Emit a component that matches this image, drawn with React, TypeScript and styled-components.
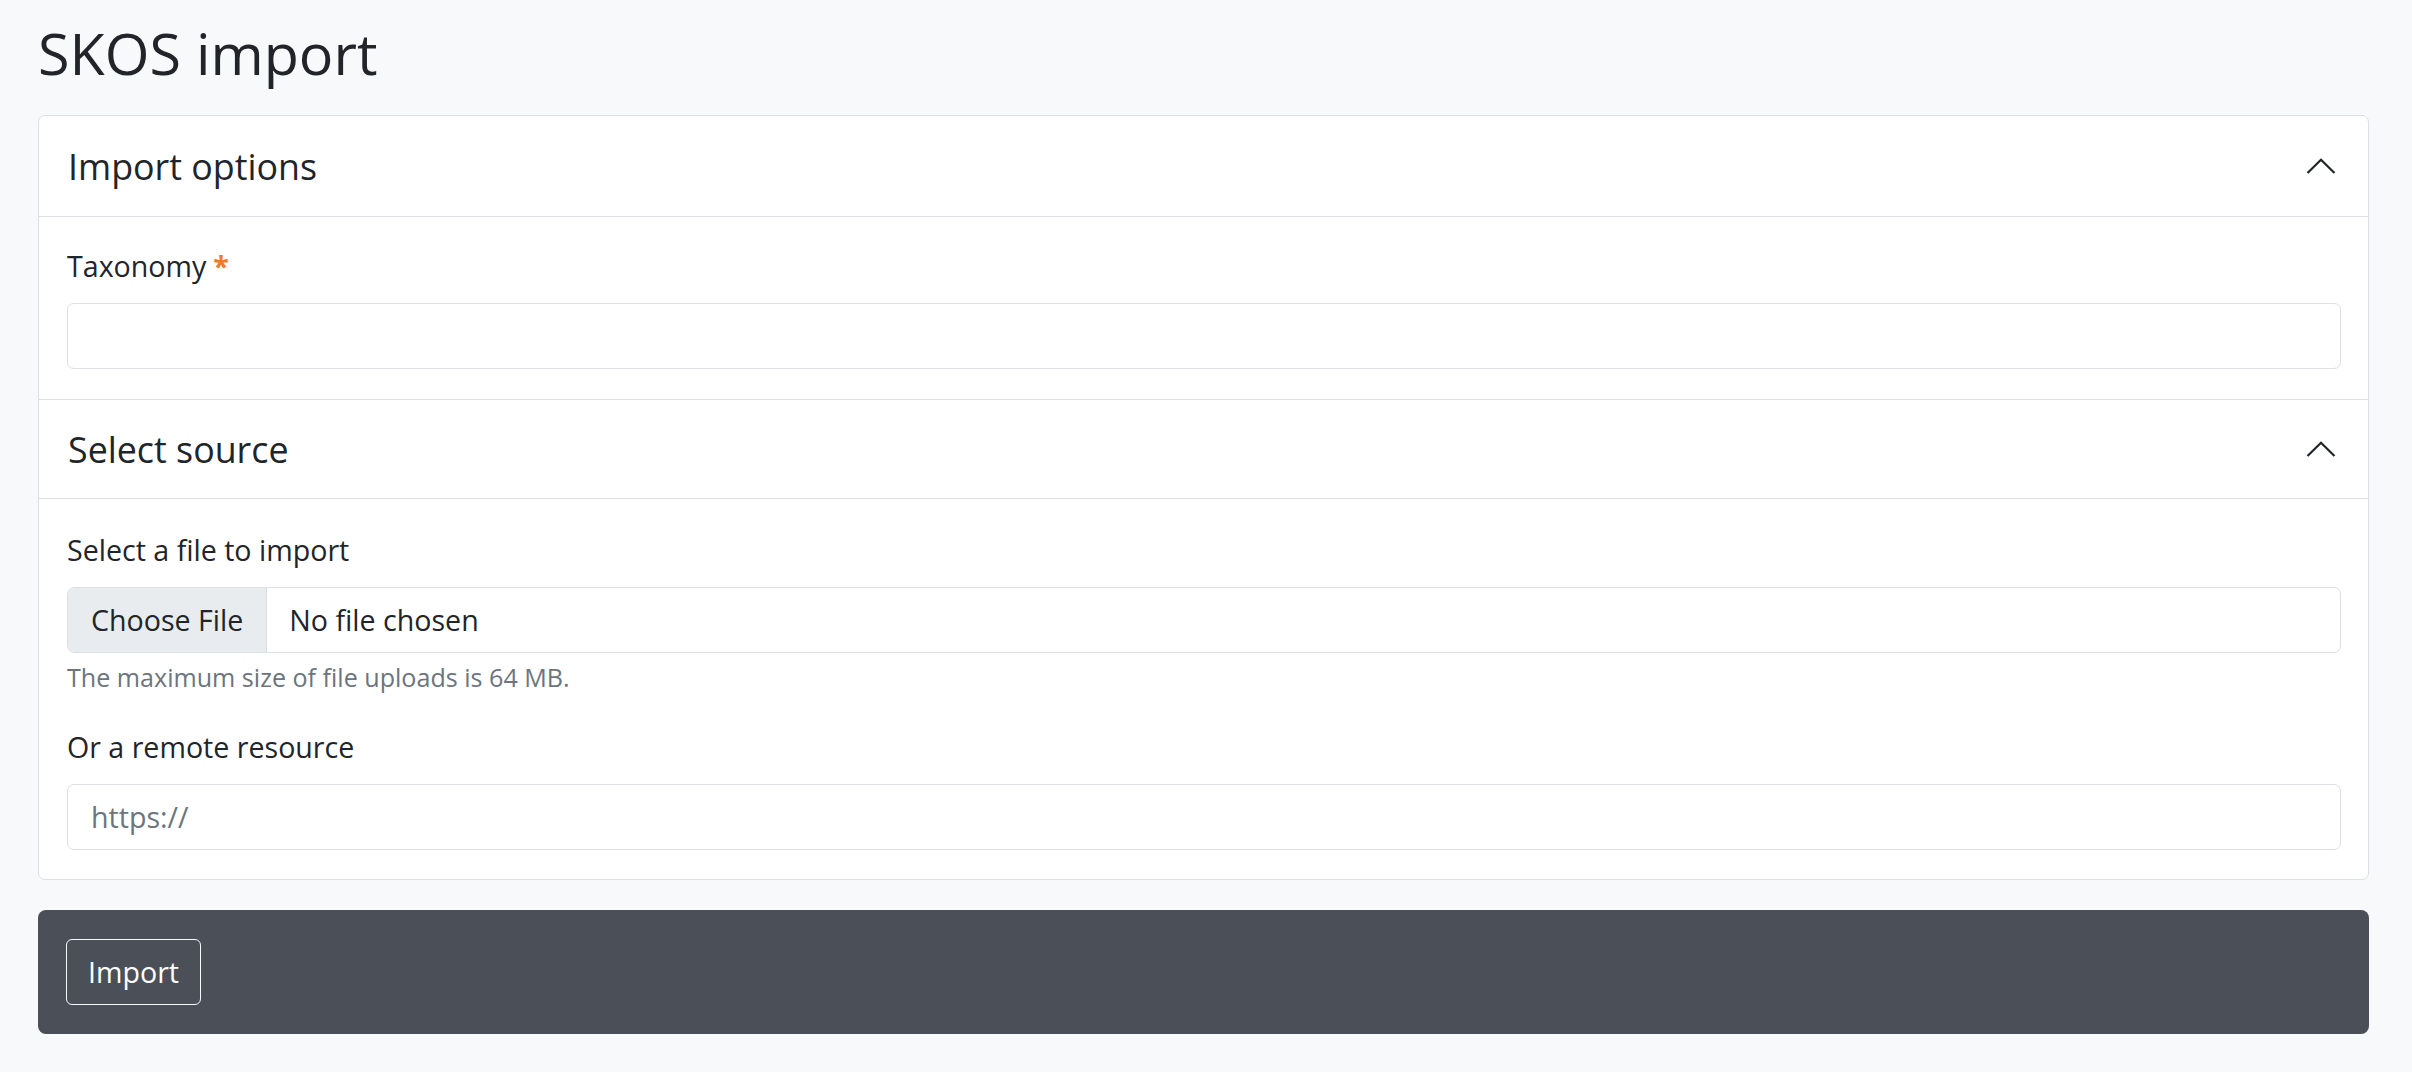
import styled, { createGlobalStyle } from 'styled-components';

const GlobalStyle = createGlobalStyle`
	* {
		box-sizing: border-box;
	}

	body {
		margin: 0;
		background-color: #f8f9fa;
		color: #212529;
		font-family: 'Open Sans', 'Noto Sans', sans-serif;
	}
`;

const Page = styled.main`
	padding: 20px 43px 37px 38px;
`;

const Title = styled.h2`
	margin: 0 0 28px;
	font-size: 57.5px;
	font-weight: 400;
	line-height: 67px;
`;

const Card = styled.section`
	background-color: #fff;
	border: 1px solid #dcdfe3;
	border-radius: 7px;
	overflow: hidden;
`;

const SectionHeader = styled.div<{ $divided?: boolean }>`
	display: flex;
	align-items: center;
	justify-content: space-between;
	padding: ${(p) => (p.$divided ? '28px' : '29px')} 32px ${(p) => (p.$divided ? '28px' : '29px')} 29px;
	border-top: ${(p) => (p.$divided ? '1px solid #dcdfe3' : 'none')};
	border-bottom: 1px solid #dcdfe3;
`;

const SectionTitle = styled.h5`
	margin: 0;
	font-size: 35.8px;
	font-weight: 400;
	line-height: 42px;
`;

const SectionBody = styled.div<{ $top?: number; $bottom?: number }>`
	padding: ${(p) => p.$top ?? 28}px 27px ${(p) => p.$bottom ?? 29}px 28px;
`;

const FormGroup = styled.div`
	& + & {
		margin-top: 30px;
	}
`;

const Label = styled.label`
	display: block;
	margin-bottom: 16px;
	font-size: 28.6px;
	line-height: 42px;
`;

const Required = styled.span`
	margin-left: 7px;
	color: #f27b21;
	font-weight: 700;
`;

const TextInput = styled.input`
	display: block;
	width: 100%;
	padding: 11px 23px;
	border: 1px solid #dcdfe3;
	border-radius: 7px;
	background-color: #fff;
	color: #212529;
	font-family: inherit;
	font-size: 28.6px;
	line-height: 42px;

	&::placeholder {
		color: #6c757d;
	}

	&:focus {
		outline: none;
	}
`;

const FileField = styled.label`
	display: flex;
	align-items: stretch;
	height: 66px;
	border: 1px solid #dcdfe3;
	border-radius: 7px;
	overflow: hidden;
	font-size: 28.6px;
	line-height: 64px;
	cursor: pointer;

	input {
		display: none;
	}
`;

const FileButton = styled.span`
	padding: 0 23px 0 23px;
	background-color: #e9ecef;
	border-right: 1px solid #dcdfe3;
`;

const FileName = styled.span`
	padding-left: 22px;
`;

const HelpText = styled.div`
	margin-top: 6px;
	color: #6c757d;
	font-size: 25.1px;
	line-height: 37px;
`;

const Footer = styled.div`
	margin-top: 30px;
	padding: 29px 28px;
	background-color: #4b5058;
	border-radius: 8px;
`;

const ImportButton = styled.button`
	padding: 11px 21px;
	border: 1px solid #f8f9fa;
	border-radius: 6px;
	background: transparent;
	color: #fff;
	font-family: inherit;
	font-size: 28.6px;
	line-height: 42px;
	cursor: pointer;
`;

const Chevron = () => (
	<svg width='30' height='16' viewBox='0 0 30 16' fill='none'>
		<polyline points='1.5,15 15,1.8 28.5,15' stroke='#212529' strokeWidth='2.2' />
	</svg>
);

const App = () => {
	return (
		<>
			<GlobalStyle />
			<Page>
				<Title>SKOS import</Title>
				<Card>
					<SectionHeader>
						<SectionTitle>Import options</SectionTitle>
						<Chevron />
					</SectionHeader>
					<SectionBody $bottom={30}>
						<FormGroup>
							<Label htmlFor='taxonomy'>
								Taxonomy<Required>*</Required>
							</Label>
							<TextInput id='taxonomy' type='text' />
						</FormGroup>
					</SectionBody>

					<SectionHeader $divided>
						<SectionTitle>Select source</SectionTitle>
						<Chevron />
					</SectionHeader>
					<SectionBody $top={30}>
						<FormGroup>
							<Label>Select a file to import</Label>
							<FileField>
								<input type='file' />
								<FileButton>Choose File</FileButton>
								<FileName>No file chosen</FileName>
							</FileField>
							<HelpText>The maximum size of file uploads is 64 MB.</HelpText>
						</FormGroup>
						<FormGroup>
							<Label htmlFor='remote'>Or a remote resource</Label>
							<TextInput id='remote' type='text' placeholder='https://' />
						</FormGroup>
					</SectionBody>
				</Card>
				<Footer>
					<ImportButton type='button'>Import</ImportButton>
				</Footer>
			</Page>
		</>
	);
};

export default App;
